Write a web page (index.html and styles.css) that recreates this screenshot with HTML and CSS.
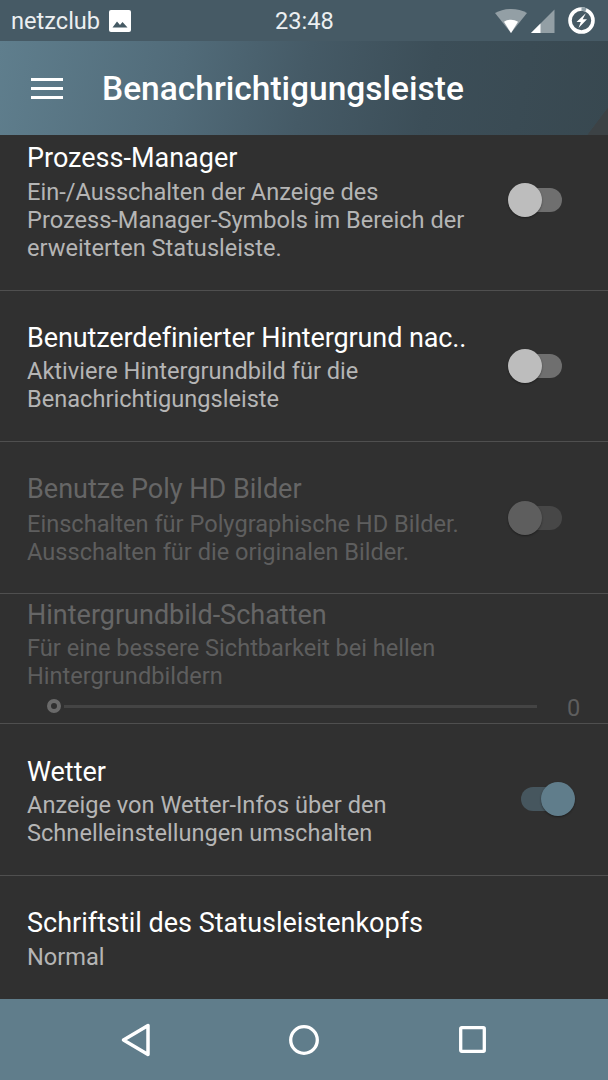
FILE: index.html
```html
<!DOCTYPE html>
<html lang="de">
<head>
<meta charset="utf-8">
<title>Benachrichtigungsleiste</title>
<link rel="stylesheet" href="styles.css">
</head>
<body>
<div class="screen">
  <header class="status">
    <div class="status-left">
      <span class="carrier">netzclub</span>
      <svg class="ic-image" width="22" height="22" viewBox="0 0 22 22"><rect width="22" height="22" rx="2" fill="#fff"/><path d="M3.500 17.500 8 11.500l3 3.500 2.500-3 5 5.500z" fill="#455a64"/></svg>
    </div>
    <span class="clock">23:48</span>
    <div class="status-right">
      <svg class="ic-wifi" width="32" height="24" viewBox="0 0 32 24"><path d="M0 4C4.500 1.500 10 0 16 0s11.500 1.500 16 4L16 24z" fill="#fff" fill-opacity=".42"/><path d="M9 12.800c2-1.300 4.500-2 7-2s5 .7 7 2L16 24z" fill="#fff"/></svg>
      <svg class="ic-signal" width="24" height="24" viewBox="0 0 24 24"><path d="M0 24 23.500 0.500V24z" fill="#fff" fill-opacity=".42"/><path d="M0 24 9.500 14.500V24z" fill="#fff"/></svg>
      <svg class="ic-batt" width="27" height="27" viewBox="0 0 27 27"><circle cx="13.500" cy="13.500" r="11.500" fill="none" stroke="#fff" stroke-width="3.600"/><path d="M13.500 2A11.500 11.500 0 0 1 18 2.900" fill="none" stroke="#90a0a8" stroke-width="3.600"/><path d="M17.500 6.500 8.500 15h4.300l-2.300 6 8.500-8.800h-4.300l3-5.700z" fill="#fff"/></svg>
    </div>
  </header>
  <div class="toolbar">
    <div class="burger"><i></i><i></i><i></i></div>
    <h1 class="title">Benachrichtigungsleiste</h1>
  </div>
  <main class="list">
    <section class="row row-a">
      <div class="text">
        <h2>Prozess-Manager</h2>
        <p>Ein-/Ausschalten der Anzeige des<br>Prozess-Manager-Symbols im Bereich der erweiterten Statusleiste.</p>
      </div>
      <span class="switch"><b></b></span>
    </section>
    <section class="row row-b">
      <div class="text">
        <h2 class="clip">Benutzerdefinierter Hintergrund nac..</h2>
        <p>Aktiviere Hintergrundbild für die Benachrichtigungsleiste</p>
      </div>
      <span class="switch"><b></b></span>
    </section>
    <section class="row row-c off">
      <div class="text">
        <h2>Benutze Poly HD Bilder</h2>
        <p>Einschalten für Polygraphische HD Bilder. Ausschalten für die originalen Bilder.</p>
      </div>
      <span class="switch"><b></b></span>
    </section>
    <section class="row row-d off">
      <h2>Hintergrundbild-Schatten</h2>
      <p>Für eine bessere Sichtbarkeit bei hellen Hintergrundbildern</p>
      <div class="slider"><span class="knob"></span><span class="track"></span><span class="val">0</span></div>
    </section>
    <section class="row row-e">
      <div class="text">
        <h2>Wetter</h2>
        <p>Anzeige von Wetter-Infos über den Schnelleinstellungen umschalten</p>
      </div>
      <span class="switch on"><b></b></span>
    </section>
    <section class="row row-f">
      <div class="text">
        <h2>Schriftstil des Statusleistenkopfs</h2>
        <p>Normal</p>
      </div>
    </section>
  </main>
  <nav class="nav">
    <svg width="30" height="34" viewBox="0 0 30 34"><path d="M27 2.500V31.500L2.500 17z" fill="none" stroke="#fff" stroke-width="3.500" stroke-linejoin="round"/></svg>
    <svg width="30" height="30" viewBox="0 0 30 30"><circle cx="15" cy="15" r="13.300" fill="none" stroke="#fff" stroke-width="3.300"/></svg>
    <svg width="27" height="27" viewBox="0 0 27 27"><rect x="1.700" y="1.700" width="23.600" height="23.600" rx="1" fill="none" stroke="#fff" stroke-width="3.300"/></svg>
  </nav>
</div>
</body>
</html>
```
FILE: styles.css
```css
* { box-sizing: border-box; margin: 0; padding: 0; }
html, body { width: 608px; height: 1080px; overflow: hidden; background: #303030; }
body { font-family: Roboto, "Noto Sans", sans-serif; color: #fff; }
.screen { width: 608px; height: 1080px; display: flex; flex-direction: column; }

.status { height: 41px; flex: none; background: #465a65; display: flex; align-items: center; justify-content: space-between; padding: 0 13px 0 11px; position: relative; font-size: 23.600px; color: #eceff1; }
.status-left { display: flex; align-items: center; gap: 9px; }
.clock { position: absolute; left: 275px; top: 7px; line-height: 28px; }
.carrier { line-height: 28px; }
.status-right { display: flex; align-items: center; }
.ic-wifi { margin-top: 1px; }
.ic-signal { margin-left: 4px; margin-top: 1px; }
.ic-batt { margin-left: 13px; }

.toolbar { height: 94px; flex: none; display: flex; align-items: center; padding-left: 31px; background: linear-gradient(127deg, transparent 96.9%, #3c4245 97%), linear-gradient(100deg, #5f7e8d 0%, #516b79 30%, #455a66 50%, #3c4e58 70%, #384850 100%); }
.burger { width: 32px; display: flex; flex-direction: column; gap: 6px; }
.burger i { display: block; height: 3px; background: #fff; }
.title { margin-left: 39px; margin-top: 2px; font-size: 33.500px; font-weight: 500; line-height: 40px; color: #fff; white-space: nowrap; }

.list { flex: 1; min-height: 0; overflow: hidden; background: #303030; }
.row { border-bottom: 1px solid #4f4f4f; padding-left: 27px; display: flex; flex-direction: row; }
.text { width: 445px; }
.row h2 { font-size: 27px; font-weight: 400; line-height: 32px; color: #fff; white-space: nowrap; margin-bottom: 4px; }
.row p { font-size: 23.600px; line-height: 28px; color: #b5b5b5; }
.row .clip { overflow: hidden; letter-spacing: -0.1px; }
.row.off h2 { color: #666; }
.row.off p { color: #5e5e5e; }

.row-a { height: 156px; padding-top: 7px; }
.row-b { height: 151px; padding-top: 31px; }
.row-b h2 { margin-bottom: 3px; }
.row-c { height: 152px; padding-top: 31px; }
.row-c h2 { margin-bottom: 5px; }
.row-d { height: 130px; padding-top: 5px; display: block; }
.row-d h2 { margin-bottom: 3px; }
.row-e { height: 152px; padding-top: 32px; }
.row-e h2 { margin-bottom: 3px; }
.row-f { height: 123px; padding-top: 31px; border-bottom: 0; }

.switch { position: relative; width: 54px; height: 34px; margin-left: 36px; flex: none; }
.switch::before { content: ""; position: absolute; left: 10px; top: 5px; width: 44px; height: 24px; border-radius: 12px; background: #6f6f6f; }
.switch b { position: absolute; left: 0; top: 0; width: 34px; height: 34px; border-radius: 50%; background: #bdbdbd; box-shadow: 0 1px 2px rgba(0,0,0,.4); }
.row-a .switch { margin-top: 41px; }
.row-b .switch { margin-top: 27px; }
.row-c .switch { margin-top: 28px; }
.row-e .switch { margin-top: 26px; margin-left: 49px; }
.off .switch::before { background: #474747; }
.off .switch b { background: #5e5e5e; }
.switch.on::before { background: #46565e; left: 0; }
.switch.on b { left: 20px; background: #607d8b; }

.slider { display: flex; align-items: center; height: 24px; margin-top: 4px; padding-left: 20px; }
.knob { width: 14px; height: 14px; border-radius: 50%; border: 4px solid #6a6a6a; flex: none; }
.track { width: 473px; height: 3px; background: #444; margin-left: 3px; flex: none; }
.val { margin-left: 30px; margin-top: 4px; font-size: 23.600px; color: #5e5e5e; }

.nav { height: 81px; flex: none; background: #607d8b; display: flex; align-items: center; padding-left: 121px; gap: 0; }
.nav svg:nth-child(2) { margin-left: 138px; }
.nav svg:nth-child(3) { margin-left: 140px; }
```
